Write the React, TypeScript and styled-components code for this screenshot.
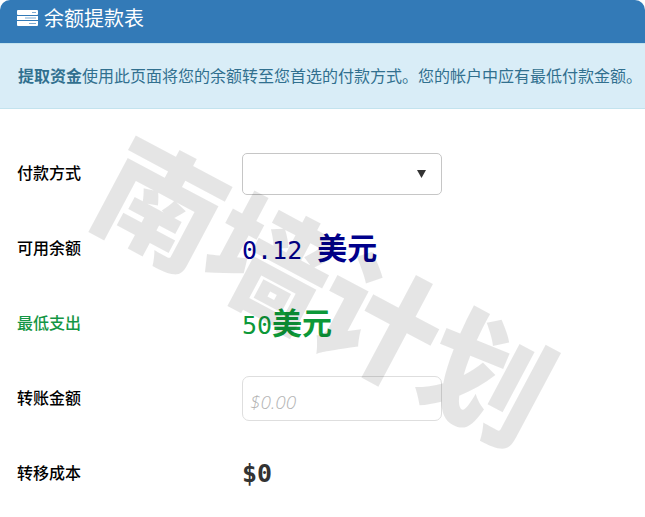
import React from "react";
import styled, { createGlobalStyle } from "styled-components";

const GlobalStyle = createGlobalStyle`
  * { box-sizing: border-box; }
  body {
    margin: 0;
    background: #fff;
    color: #000;
    font-family: "Noto Sans CJK SC", sans-serif;
    font-size: 16px;
    line-height: 24px;
  }
`;

const Panel = styled.main`
  overflow: hidden;
  border-radius: 10px 10px 0 0;
`;

const Header = styled.header`
  display: flex;
  align-items: center;
  gap: 6px;
  height: 43px;
  padding: 0 17px 7px;
  background: #337ab7;
  color: #fff;
`;

const Title = styled.h1`
  margin: 0;
  font-size: 20px;
  font-weight: 400;
  line-height: 28px;
`;

const Notice = styled.p`
  margin: 0;
  padding: 19px 0 21px 18px;
  border-top: 1px solid #c3e3ee;
  border-bottom: 1px solid #c3e3ee;
  background: #d9edf7;
  color: #31708f;
  white-space: nowrap;
`;

const Form = styled.form`
  position: relative;
  padding: 27px 17px 6px;
`;

const Row = styled.div`
  display: grid;
  grid-template-columns: 225px 1fr;
  align-items: center;
  min-height: 75px;
`;

const Label = styled.label<{ $tone?: string }>`
  padding-bottom: 4px;
  color: ${(p) => p.$tone ?? "#000"};
  font-weight: 500;
`;

const SelectBox = styled.div`
  display: grid;
  align-items: center;
  width: 200px;
  > * { grid-area: 1 / 1; }
`;

const Select = styled.select`
  appearance: none;
  width: 100%;
  height: 42px;
  padding: 0 32px 0 8px;
  border: 1px solid #c6c6c6;
  border-radius: 5px;
  background: #fff;
  font: inherit;
`;

const Arrow = styled.svg`
  justify-self: end;
  margin-right: 16px;
  pointer-events: none;
`;

const AmountInput = styled.input`
  width: 200px;
  height: 45px;
  padding: 6px 7px 0;
  border: 1px solid #dedede;
  border-radius: 7px;
  background: #fff;
  font: italic 300 19px "Open Sans", sans-serif;
  &::placeholder { color: #b5b5b5; opacity: 1; }
`;

const Value = styled.output<{ $tone: string; $bold?: boolean }>`
  color: ${(p) => p.$tone};
  font-family: "DejaVu Sans Mono", monospace;
  font-size: 25px;
  font-weight: ${(p) => (p.$bold ? 700 : 400)};
  line-height: 36px;
  white-space: pre;
`;

const Currency = styled.span`
  font-family: "Noto Sans CJK SC", sans-serif;
  font-size: 30px;
  font-weight: 700;
`;

const Watermark = styled.div`
  position: absolute;
  inset: 0 0 56px 8px;
  display: grid;
  place-items: center;
  pointer-events: none;
  color: rgba(0, 0, 0, 0.1);
  font-size: 123px;
  font-weight: 900;
  line-height: 1;
  white-space: nowrap;
  span { transform: rotate(28deg); }
`;

const TasksIcon = () => (
  <svg width="21" height="16" viewBox="0 0 21 16" fill="none" aria-hidden="true">
    <path fill="#fff" d="M1 0h19q1 0 1 1v3q0 1-1 1H1Q0 5 0 4V1q0-1 1-1zM0 6h21v4H0zM0 11h21v4q0 1-1 1H1q-1 0-1-1z" />
    <path fill="#7fabd2" d="M15 2h4v1h-4zM8 7.500h11v1H8zM12 13h7v1h-7z" />
  </svg>
);

export default function App() {
  return (
    <>
      <GlobalStyle />
      <Panel>
        <Header>
          <TasksIcon />
          <Title>余额提款表</Title>
        </Header>
        <Notice>
          <strong>提取资金</strong>使用此页面将您的余额转至您首选的付款方式。您的帐户中应有最低付款金额。
        </Notice>
        <Form>
          <Row>
            <Label htmlFor="method">付款方式</Label>
            <SelectBox>
              <Select id="method" defaultValue="">
                <option value="" />
              </Select>
              <Arrow width="9" height="8" viewBox="0 0 9 8" aria-hidden="true">
                <path d="M0 0h9L4.500 8z" fill="#333" />
              </Arrow>
            </SelectBox>
          </Row>
          <Row>
            <Label htmlFor="balance">可用余额</Label>
            <Value id="balance" $tone="#00008b">0.12 <Currency>美元</Currency></Value>
          </Row>
          <Row>
            <Label htmlFor="minimum" $tone="#149645">最低支出</Label>
            <Value id="minimum" $tone="#0d9838">50<Currency>美元</Currency></Value>
          </Row>
          <Row>
            <Label htmlFor="amount">转账金额</Label>
            <AmountInput id="amount" type="text" inputMode="decimal" placeholder="$0.00" />
          </Row>
          <Row>
            <Label htmlFor="cost">转移成本</Label>
            <Value id="cost" $tone="#333" $bold>$0</Value>
          </Row>
          <Watermark aria-hidden="true"><span>南墙计划</span></Watermark>
        </Form>
      </Panel>
    </>
  );
}
